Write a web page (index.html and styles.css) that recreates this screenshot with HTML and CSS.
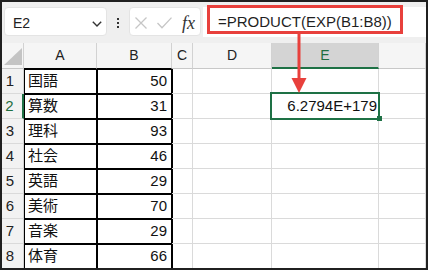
FILE: index.html
```html
<!DOCTYPE html>
<html lang="ja">
<head>
<meta charset="utf-8">
<link rel="stylesheet" href="styles.css">
</head>
<body>
<div class="frame">
  <div class="toolbar">
    <div class="namebox">
      <span class="ref">E2</span>
      <svg class="chev" width="10" height="6" viewBox="0 0 10 6"><path d="M0.8 0.8 L5 5 L9.2 0.8" fill="none" stroke="#333" stroke-width="1.4"/></svg>
    </div>
    <div class="dots"><i></i><i></i><i></i></div>
    <div class="fxbox">
      <svg class="ico" width="12" height="12" viewBox="0 0 12 12"><path d="M0.5 0.5 L11.5 11.5 M11.5 0.5 L0.5 11.5" stroke="#c6c6c6" stroke-width="1.3" fill="none"/></svg>
      <svg class="ico" width="15" height="12" viewBox="0 0 15 12"><path d="M0.5 6 L5 10.8 L14.5 0.6" stroke="#c6c6c6" stroke-width="1.3" fill="none"/></svg>
      <span class="fx">fx</span>
    </div>
    <div class="formula"><div class="hl">=PRODUCT(EXP(B1:B8))</div></div>
  </div>
  <div class="grid">
    <div class="corner"><svg width="18" height="17" viewBox="0 0 18 17"><polygon points="18,0 18,17 0,17" fill="#c4c4c4"/></svg></div>
    <div class="ch tb">A</div>
    <div class="ch tb">B</div>
    <div class="ch">C</div>
    <div class="ch">D</div>
    <div class="ch sel">E</div>
    <div class="ch"></div>

    <div class="rh">1</div><div class="c ta">国語</div><div class="c tbv num">50</div><div class="c cc"></div><div class="c"></div><div class="c"></div><div class="c"></div>
    <div class="rh rsel">2</div><div class="c ta">算数</div><div class="c tbv num">31</div><div class="c cc"></div><div class="c"></div><div class="c num val">6.2794E+179</div><div class="c"></div>
    <div class="rh">3</div><div class="c ta">理科</div><div class="c tbv num">93</div><div class="c cc"></div><div class="c"></div><div class="c"></div><div class="c"></div>
    <div class="rh">4</div><div class="c ta">社会</div><div class="c tbv num">46</div><div class="c cc"></div><div class="c"></div><div class="c"></div><div class="c"></div>
    <div class="rh">5</div><div class="c ta">英語</div><div class="c tbv num">29</div><div class="c cc"></div><div class="c"></div><div class="c"></div><div class="c"></div>
    <div class="rh">6</div><div class="c ta">美術</div><div class="c tbv num">70</div><div class="c cc"></div><div class="c"></div><div class="c"></div><div class="c"></div>
    <div class="rh">7</div><div class="c ta">音楽</div><div class="c tbv num">29</div><div class="c cc"></div><div class="c"></div><div class="c"></div><div class="c"></div>
    <div class="rh">8</div><div class="c ta">体育</div><div class="c tbv num">66</div><div class="c cc"></div><div class="c"></div><div class="c"></div><div class="c"></div>
  </div>
  <div class="selbox"></div>
  <div class="handle"></div>
  <svg class="arrow" width="17" height="60" viewBox="0 0 17 60"><line x1="8" y1="0" x2="8" y2="46" stroke="#e8403c" stroke-width="3"/><polygon points="0.5,44 15.5,44 8,59" fill="#e8403c"/></svg>
</div>
</body>
</html>
```

FILE: styles.css
```css
* { box-sizing: border-box; }
html, body { margin: 0; padding: 0; background: #fff; }
body { font-family: "Liberation Sans", "Noto Sans CJK JP", sans-serif; color: #222; }

.frame {
  position: relative;
  width: 428px;
  height: 270px;
  border: 2px solid #202020;
  overflow: hidden;
  background: #fff;
}

/* formula bar area */
.toolbar {
  height: 41px;
  background: #efefef;
  display: flex;
  align-items: flex-start;
  padding-top: 5px;
}
.namebox {
  margin-left: 2px;
  width: 103px;
  height: 29px;
  background: #fff;
  border: 1px solid #e4e4e4;
  border-radius: 4px;
  display: flex;
  align-items: center;
  justify-content: space-between;
  padding: 3px 4px 0 8px;
  font-size: 14px;
}
.ref { line-height: 16px; }
.chev { display: block; margin-top: 1px; }
.dots {
  width: 22px;
  height: 29px;
  display: flex;
  flex-direction: column;
  align-items: center;
  justify-content: center;
  gap: 2px;
  padding-top: 3px;
}
.dots i { display: block; width: 2px; height: 2px; background: #333; }
.fxbox {
  width: 72px;
  height: 29px;
  background: #fff;
  border: 1px solid #e4e4e4;
  border-radius: 4px;
  display: flex;
  align-items: center;
  padding: 3px 0 0 5px;
  gap: 10px;
}
.ico { display: block; }
.fx {
  font-family: "Liberation Serif", serif;
  font-style: italic;
  font-size: 18px;
  line-height: 18px;
  color: #333;
  margin-left: 0;
}
.formula {
  margin-left: 2px;
  flex: 1;
  height: 30px;
  background: #fff;
  padding-left: 4px;
}
.hl {
  margin-top: -2px;
  width: 196px;
  height: 29px;
  border: 3px solid #e8403c;
  font-size: 15px;
  line-height: 17px;
  padding: 5px 0 0 8px;
  color: #1f1f1f;
  white-space: nowrap;
}

/* sheet */
.grid {
  display: grid;
  grid-template-columns: 22px 73px 75px 21px 79px 107px 47px;
  grid-template-rows: 26px repeat(8, 25px);
}
.ch, .corner {
  background: #f5f5f5;
  border-right: 1px solid #d2d2d2;
  border-bottom: 1px solid #c8c8c8;
  text-align: center;
  font-size: 14px;
  line-height: 25px;
  color: #222;
}
.corner {
  display: flex;
  align-items: flex-end;
  justify-content: flex-end;
  padding: 0 1px 3px 0;
}
.corner svg { display: block; }
.ch.tb { border-bottom-color: #000; }
.ch.sel {
  background: #d4d4d4;
  color: #1e6e40;
  border-bottom: 2px solid #1e7145;
}
.rh {
  background: #f2f2f2;
  border-right: 1px solid #d2d2d2;
  border-bottom: 1px solid #dadada;
  text-align: center;
  padding-right: 5px;
  font-size: 15px;
  line-height: 24px;
  color: #222;
}
.rh.rsel {
  color: #1e6e40;
  border-right: 2px solid #1e7145;
}
.c {
  border-right: 1px solid #dadada;
  border-bottom: 1px solid #dadada;
  font-size: 15px;
  line-height: 24px;
  padding: 0 4px;
  white-space: nowrap;
  color: #111;
}
.num { text-align: right; }
.c.ta {
  border-right-color: #000;
  border-bottom-color: #000;
  box-shadow: inset 1px 1px 0 #000;
}
.c.tbv {
  border-right-color: #000;
  border-bottom-color: #000;
  box-shadow: inset 1px 1px 0 #000;
}
.c.cc { box-shadow: inset 1px 0 0 #000; }
.c.val { padding-right: 1px; overflow: visible; }

/* overlays */
.selbox {
  position: absolute;
  left: 268px;
  top: 90px;
  width: 110px;
  height: 28px;
  border: 2px solid #1e7145;
}
.handle {
  position: absolute;
  left: 375px;
  top: 114px;
  width: 5px;
  height: 5px;
  background: #1e7145;
}
.arrow {
  position: absolute;
  left: 289px;
  top: 32px;
  display: block;
}
```
